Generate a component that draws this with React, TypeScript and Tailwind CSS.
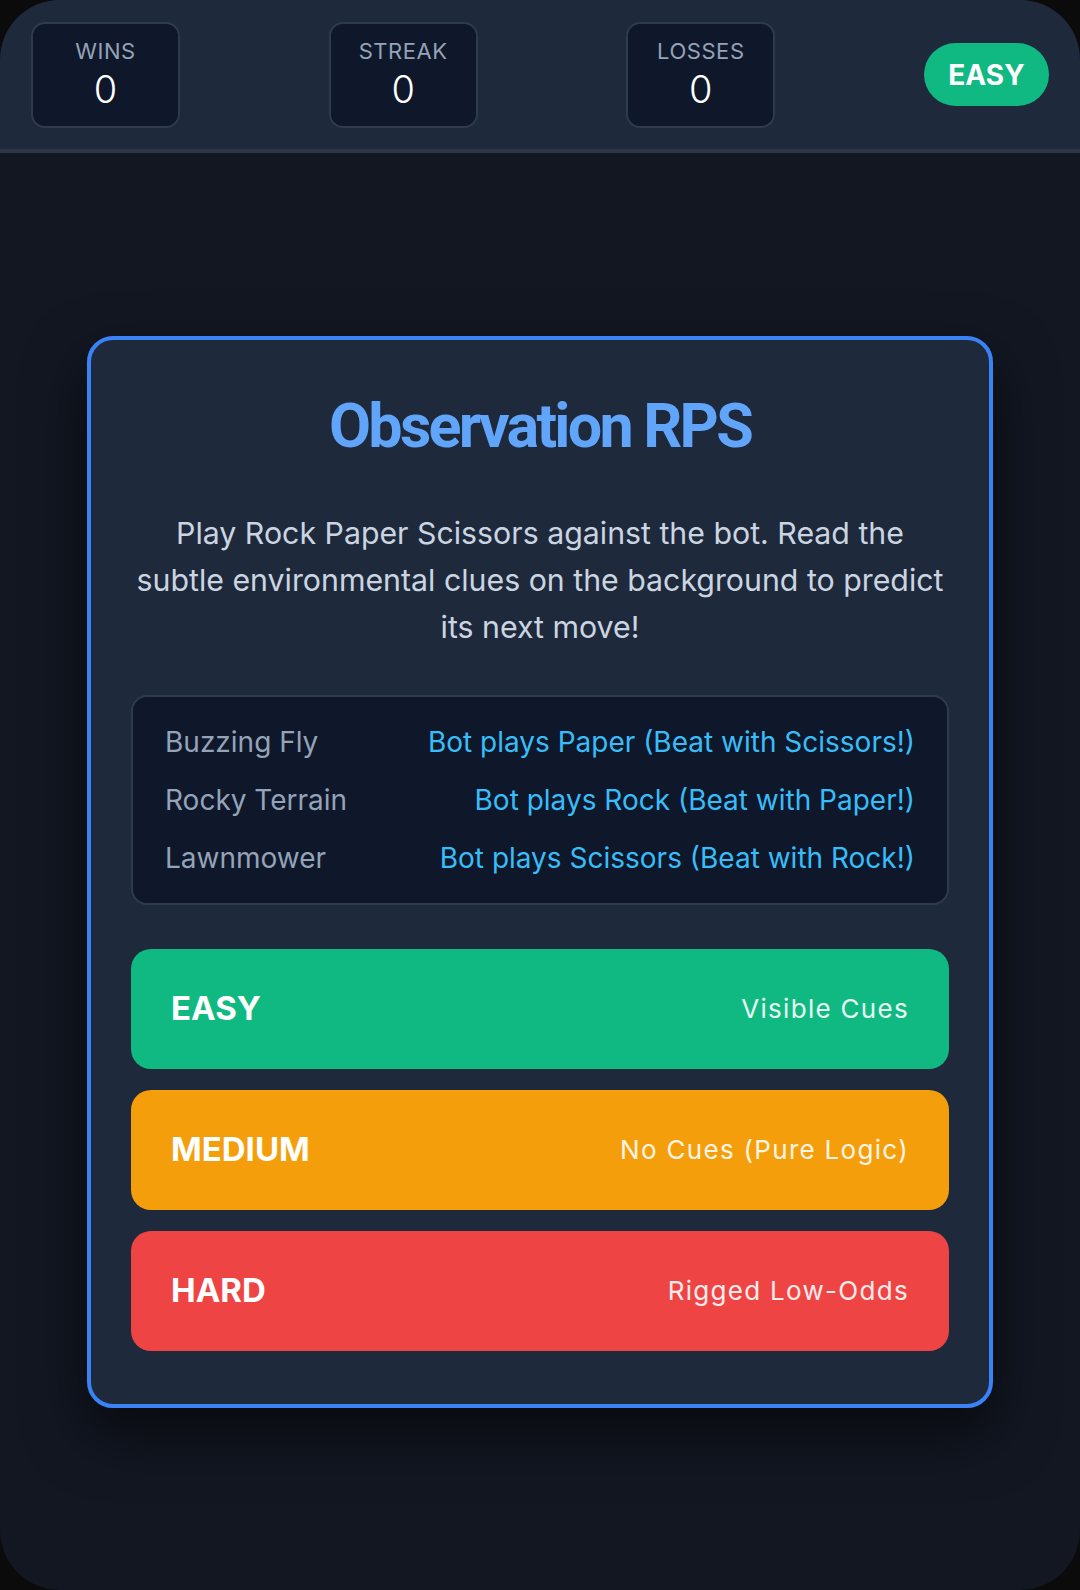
import React from "react";

const stats = [
  { label: "WINS", value: 0 },
  { label: "STREAK", value: 0 },
  { label: "LOSSES", value: 0 },
];

const clues = [
  { cue: "Buzzing Fly", hint: "Bot plays Paper (Beat with Scissors!)" },
  { cue: "Rocky Terrain", hint: "Bot plays Rock (Beat with Paper!)" },
  { cue: "Lawnmower", hint: "Bot plays Scissors (Beat with Rock!)" },
];

const modes = [
  { name: "EASY", note: "Visible Cues", color: "bg-[#10b981]" },
  { name: "MEDIUM", note: "No Cues (Pure Logic)", color: "bg-[#f59e0b]" },
  { name: "HARD", note: "Rigged Low-Odds", color: "bg-[#ef4444]" },
];

function StatBox({ label, value }: { label: string; value: number }) {
  return (
    <div className="w-[149px] rounded-[14px] border-2 border-[#2e3a4d] bg-[#0f172a] pt-[13px] pb-[13px] text-center">
      <div className="text-[22px] leading-[28px] tracking-wide text-[#94a3b8]">{label}</div>
      <div className="text-[38px] leading-[48px] font-light text-white">{value}</div>
    </div>
  );
}

export default function App() {
  return (
    <div className="min-h-screen bg-[#0b0b0c] font-['Inter',sans-serif]">
      <div className="flex h-[1590px] w-[1080px] flex-col overflow-hidden rounded-[60px] bg-[#121722]">
        {/* Score bar */}
        <header className="flex h-[153px] items-center justify-between border-b-4 border-[#2c3646] bg-[#1e293b] px-[31px]">
          {stats.map((s) => (
            <StatBox key={s.label} label={s.label} value={s.value} />
          ))}
          <div className="flex h-[63px] w-[125px] items-center justify-center rounded-full bg-[#10b981] text-[28px] font-bold text-white">
            EASY
          </div>
        </header>

        {/* Start menu */}
        <main className="flex flex-1 items-center justify-center">
          <div className="w-[906px] rounded-[26px] border-4 border-[#3b82f6] bg-[#1e293b] px-10 pt-12 pb-[53px] shadow-[0_25px_60px_rgba(0,0,0,0.6)]">
            <h1 className="text-center font-['Roboto',sans-serif] text-[61px] leading-[76px] font-bold tracking-[-0.045em] text-[#60a5fa]">
              Observation RPS
            </h1>
            <p className="mt-[46px] text-center text-[30.3px] leading-[47px] text-[#cbd5e1]">
              Play Rock Paper Scissors against the bot. Read the subtle environmental clues on the background to predict its next move!
            </p>

            <div className="mt-[44px] flex flex-col gap-4 rounded-2xl border-2 border-[#2e3a4d] bg-[#0f172a] px-8 py-6">
              {clues.map((c) => (
                <div key={c.cue} className="flex items-center justify-between text-[28px] leading-[42px]">
                  <span className="text-[#94a3b8]">{c.cue}</span>
                  <span className="text-[#38bdf8]">{c.hint}</span>
                </div>
              ))}
            </div>

            <div className="mt-[44px] flex flex-col gap-[21px]">
              {modes.map((m) => (
                <button
                  key={m.name}
                  className={`${m.color} flex h-[120px] items-center justify-between rounded-[20px] px-10 text-white`}
                >
                  <span className="text-[33px] font-bold">{m.name}</span>
                  <span className="text-[26px] tracking-wider text-white/90">{m.note}</span>
                </button>
              ))}
            </div>
          </div>
        </main>
      </div>
    </div>
  );
}
